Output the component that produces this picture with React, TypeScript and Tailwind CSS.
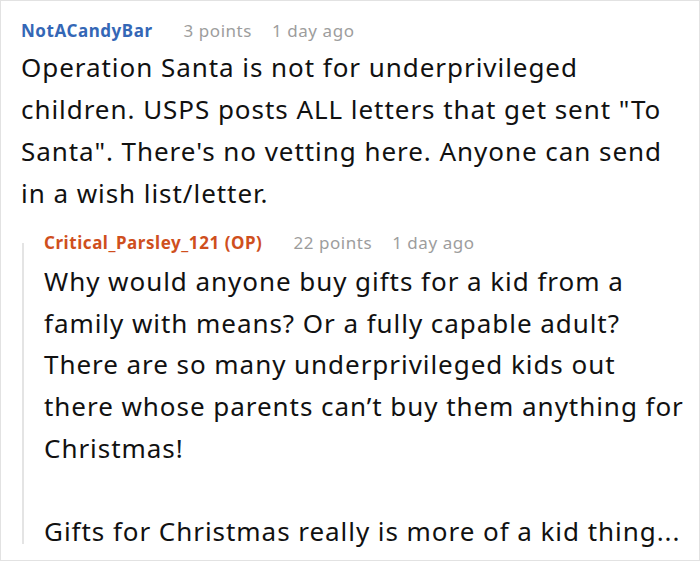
import React from "react";

const font = { fontFamily: '"Noto Sans", "Open Sans", sans-serif' };

function Meta({ name, nameColor, points, time }: { name: string; nameColor: string; points: string; time: string }) {
  return (
    <div className="flex items-baseline text-[17px] leading-[24px] tracking-[0.55px] whitespace-nowrap">
      <span className={`font-bold ${nameColor}`}>{name}</span>
      <span className="ml-[31px] text-[#9d9d9d]">{points}</span>
      <span className="ml-[20px] text-[#9d9d9d]">{time}</span>
    </div>
  );
}

export default function App() {
  return (
    <div className="w-[700px] h-[562px] bg-white overflow-hidden" style={font}>
      <div className="h-[561px] w-[700px] border border-[#e2e2e2] pl-[20px] pr-[14px] pt-[18px] overflow-hidden">
        <Meta name="NotACandyBar" nameColor="text-[#3467b6]" points="3 points" time="1 day ago" />
        <p className="mt-[3px] text-[26px] leading-[42px] tracking-[0.95px] text-[#111]">
          Operation Santa is not for underprivileged children. USPS posts ALL letters that get sent "To Santa". There's no vetting here. Anyone can send in a wish list/letter.
        </p>
        <div className="mt-[17px] flex">
          <div className="mt-[12px] ml-[1px] h-[301px] w-[2px] shrink-0 bg-[#e4e4e4]" />
          <div className="ml-[20px] min-w-0 flex-1">
            <Meta name="Critical_Parsley_121 (OP)" nameColor="text-[#cf4f1d]" points="22 points" time="1 day ago" />
            <div className="mt-[6px] text-[26px] leading-[41.7px] tracking-[0.95px] text-[#111]">
              <p>
                Why would anyone buy gifts for a kid from a family with means? Or a fully capable adult? There are so many underprivileged kids out there whose parents can’t buy them anything for Christmas!
              </p>
              <p className="mt-[41.7px]">Gifts for Christmas really is more of a kid thing...</p>
            </div>
          </div>
        </div>
      </div>
    </div>
  );
}
